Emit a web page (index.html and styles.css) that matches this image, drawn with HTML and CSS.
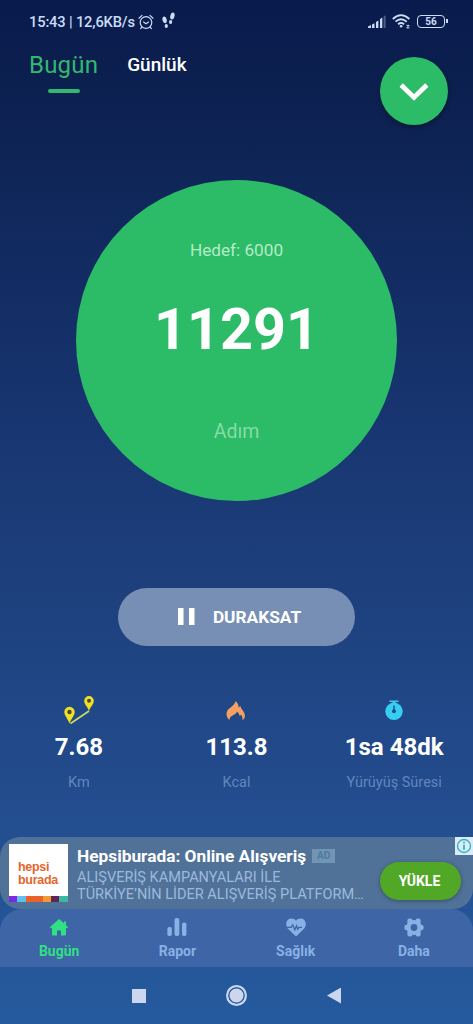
FILE: index.html
```html
<!DOCTYPE html>
<html lang="tr">
<head>
  <meta charset="UTF-8" />
  <meta name="viewport" content="width=device-width, initial-scale=1.0"/>
  <title>Adım Sayar</title>
  <link rel="stylesheet" href="styles.css">
</head>
<body>
  <div class="status-bar">
    <span class="status-text">15:43 | 12,6KB/s</span>
    <svg class="alarm" width="16" height="16" viewBox="0 0 16 16" fill="none" stroke="currentColor" stroke-width="1.2" stroke-linecap="round">
      <circle cx="8" cy="8.5" r="5.8"/>
      <path d="M5.6 8l2.4 1.7L10.6 8M1 4.2L4 1.4M15 4.2L12 1.4M3.9 13.2l-1.2 1.3M12.1 13.2l1.2 1.3"/>
    </svg>
    <svg class="steps" width="13" height="17" viewBox="0 0 13 17" fill="currentColor">
      <ellipse cx="2.6" cy="7.8" rx="2.1" ry="3.4" transform="rotate(-12 2.6 7.8)"/>
      <ellipse cx="4.3" cy="14" rx="1.6" ry="2"/>
      <ellipse cx="10.4" cy="4" rx="2.1" ry="3.5" transform="rotate(14 10.4 4)"/>
      <ellipse cx="8.6" cy="10" rx="1.6" ry="1.9"/>
    </svg>
    <div class="status-right">
      <svg width="18" height="13" viewBox="0 0 18 13" fill="currentColor">
        <path d="M0 13v-1.5L3 10v3zM4 9.5l2.5-1.3V13H4zM8 7l2.4-1.4V13H8zM12 4l2.3-1.5V13H12z"/>
        <path d="M15.6 1.5L17.6.3V13h-2z" opacity=".35"/>
      </svg>
      <svg width="19" height="15" viewBox="0 0 19 15" fill="none" stroke="currentColor" stroke-width="1.8">
        <path d="M.8 5Q9 -2.7 17.4 5M3.5 7.7Q9 2.7 14.7 7.7M6.1 10.2Q9 7.8 12.1 10.2"/>
        <circle cx="9.1" cy="12.2" r="1.3" fill="currentColor" stroke="none"/>
        <path d="M14.5 11.4h2.6l-2.4 2.5h2.8" stroke-width="1"/>
      </svg>
      <span class="battery">56</span>
    </div>
  </div>

  <header>
    <div class="tab active">Bugün</div>
    <div class="tab">Günlük</div>
    <button class="round-btn">
      <svg width="30" height="20" viewBox="0 0 30 20" fill="none" stroke="#fff" stroke-width="4.8">
        <path d="M2.2 3L15 15.5L27.8 3"/>
      </svg>
    </button>
  </header>

  <div class="circle">
    <p class="goal">Hedef: 6000</p>
    <h1>11291</h1>
    <p class="unit">Adım</p>
  </div>

  <button class="pause-btn">
    <svg width="17" height="17" viewBox="0 0 17 17" fill="#fff">
      <path d="M0 0h5.5v17H0zM11 0h5.5v17H11z"/>
    </svg>
    DURAKSAT
  </button>

  <div class="stats">
    <div class="stat">
      <svg width="32" height="30" viewBox="0 0 32 30">
        <path d="M7.5 28.5L26 16" stroke="#c9df62" stroke-width="1.6"/>
        <path d="M6.5 28.5C4.5 23 1.3 20.7 1.3 17a5.2 5.2 0 0 1 10.4 0c0 3.7-3.2 6-5.2 11.5z" fill="#f2df22"/>
        <circle cx="6.5" cy="17" r="2.2" fill="#3f4c43"/>
        <path d="M26 16c-1.7-4.7-4.8-6.7-4.8-10.2a4.8 4.8 0 0 1 9.6 0C30.8 9.3 27.7 11.3 26 16z" fill="#f2df22"/>
        <circle cx="26" cy="5.7" r="2" fill="#3f4c43"/>
      </svg>
      <strong>7.68</strong>
      <span>Km</span>
    </div>
    <div class="stat">
      <svg width="20" height="30" viewBox="0 0 20 30">
        <path d="M3.500 25C-.5 21.500-.3 16.500 3 13.700 5.800 11.500 9 9.500 9.500 6c2.200 1.800 3.200 3.900 3.200 6.500l1.700-1.500c.3 3 4.500 5.500 4.500 9.700 0 2.200-1 3.600-2.700 4.300.5-2 .2-3.700-1-5.200l-1.600 1.200c-.4-2.300-1.200-3.600-2.800-4.300-.3 3.300-7.600 3.500-7.300 8.300z" fill="#f3a062"/>
      </svg>
      <strong>113.8</strong>
      <span>Kcal</span>
    </div>
    <div class="stat">
      <svg width="20" height="30" viewBox="0 0 20 30">
        <path d="M5.5 5.5h9v1.6h-9zM8.5 6h3v4h-3z" fill="#38cdf3"/>
        <circle cx="10" cy="16.3" r="8.7" fill="#38cdf3"/>
        <path d="M10 10.5v7" stroke="#205086" stroke-width="1.4"/>
        <circle cx="10" cy="16.3" r="2" fill="#205086"/>
      </svg>
      <strong>1sa 48dk</strong>
      <span>Yürüyüş Süresi</span>
    </div>
  </div>

  <div class="ad">
    <div class="ad-logo">
      <p>hepsi<br>burada</p>
      <div class="stripe"></div>
    </div>
    <div class="ad-text">
      <h2>Hepsiburada: Online Alışveriş <small>AD</small></h2>
      <p>ALIŞVERİŞ KAMPANYALARI İLE</p>
      <p>TÜRKİYE’NİN LİDER ALIŞVERİŞ PLATFORM…</p>
    </div>
    <button class="install-btn">YÜKLE</button>
    <div class="ad-info">
      <svg width="18" height="18" viewBox="0 0 18 18" fill="none" stroke="#35b6c2">
        <circle cx="9" cy="9" r="6.5" stroke-width="1.4"/>
        <path d="M9 7.7v5M9 4.8v1.6" stroke-width="1.8"/>
      </svg>
    </div>
  </div>

  <nav>
    <div class="nav-item active">
      <svg width="20" height="20" viewBox="0 0 20 20" fill="currentColor">
        <path d="M10 1L.8 9.3l1.2 1L3 9.700v6.500q0 1.300 1.300 1.300H8v-5h4v5h3.700q1.300 0 1.300-1.300V9.700l1 .6 1.200-1-2.200-2V3.500h-2v1.800z"/>
      </svg>
      Bugün
    </div>
    <div class="nav-item">
      <svg width="20" height="20" viewBox="0 0 20 20" fill="currentColor">
        <rect x=".4" y="9" width="4.4" height="9" rx="1.8"/>
        <rect x="7.5" y="0" width="4.8" height="18" rx="2"/>
        <rect x="15" y="4.5" width="4.4" height="13.5" rx="1.8"/>
      </svg>
      Rapor
    </div>
    <div class="nav-item">
      <svg width="20" height="20" viewBox="0 0 20 20">
        <path d="M10 18.5L2 10.8C-1.5 6.5.5.5 5.3.5c2 0 3.700.8 4.700 2.200C11 1.300 12.700.5 14.700.5 19.500.5 21.500 6.500 18 10.800z" fill="currentColor"/>
        <path d="M0 9.300h5l1.700-2.500 2.100 5 1.700-4 1.200 3.500 1.300-2H16" fill="none" stroke="#3e66a6" stroke-width="1.3"/>
      </svg>
      Sağlık
    </div>
    <div class="nav-item">
      <svg width="20" height="20" viewBox="0 0 20 20">
        <g fill="currentColor">
          <circle cx="10" cy="9.5" r="7.5"/>
          <rect x="3.4" y=".5" width="5" height="18" rx="2"/>
          <rect x="11.6" y=".5" width="5" height="18" rx="2"/>
          <rect x=".4" y="6.7" width="19.2" height="5.6" rx="2.2"/>
        </g>
        <circle cx="10" cy="9.5" r="3.4" fill="#3e66a6"/>
      </svg>
      Daha
    </div>
  </nav>

  <div class="system-bar">
    <span class="recent"></span>
    <span class="home"></span>
    <span class="back"></span>
  </div>
</body>
</html>
```
FILE: styles.css
```css
:root {
  --green: #2cbb67;
  --accent: #33b86d;
  --status: #cbdcf7;
  --nav: #88b1e5;
  --nav-bg: #3e66a6;
}

* {
  margin: 0;
  padding: 0;
  box-sizing: border-box;
}

body {
  height: 1024px;
  display: flex;
  flex-direction: column;
  background: linear-gradient(#091b4c 0, #0d2252 120px, #17346f 400px, #1e427f 620px, #224a8b 760px, #255698 940px, #255a9e 1024px);
  color: #fff;
  font-family: Roboto, sans-serif;
  overflow: hidden;
}

button {
  border: none;
  color: #fff;
  font-family: inherit;
}

svg {
  display: block;
  flex: none;
}

.status-bar {
  height: 44px;
  display: flex;
  align-items: center;
  padding: 0 27px 0 29px;
  color: var(--status);
}

.status-text {
  width: 109px;
  font-size: 14.7px;
  font-weight: 500;
  letter-spacing: -0.16px;
  white-space: nowrap;
}

.steps {
  margin: 0 0 2px 8px;
}

.status-right {
  display: flex;
  align-items: center;
  gap: 6px;
  margin-left: auto;
}

.battery {
  position: relative;
  width: 28px;
  height: 13px;
  margin-right: 1px;
  border: 1.5px solid var(--status);
  border-radius: 4px;
  font-size: 10px;
  font-weight: 700;
  line-height: 11px;
  text-align: center;
}

.battery::after {
  content: "";
  position: absolute;
  right: -4px;
  top: 3px;
  width: 2px;
  height: 4px;
  background: var(--status);
}

header {
  height: 136px;
  display: flex;
  align-items: flex-start;
  padding: 7px 25px 0 29px;
}

.tab {
  margin-right: 29px;
  padding-top: 1px;
  font-size: 19px;
  font-weight: 500;
  line-height: 26px;
}

.tab.active {
  padding: 0;
  color: var(--accent);
  font-size: 24px;
  font-weight: 400;
  line-height: 28px;
  letter-spacing: 0.2px;
}

.tab.active::after {
  content: "";
  display: block;
  width: 32px;
  height: 4px;
  margin: 10px auto 0;
  border-radius: 2px;
  background: var(--accent);
}

.round-btn {
  width: 68px;
  height: 68px;
  display: flex;
  justify-content: center;
  align-items: center;
  margin: 6px 0 0 auto;
  padding-top: 3px;
  border-radius: 50%;
  background: var(--green);
  box-shadow: 0 2px 5px rgba(0, 0, 0, 0.4);
}

.circle {
  width: 321px;
  height: 321px;
  flex: none;
  margin: 0 auto;
  padding-top: 59px;
  border-radius: 50%;
  background: var(--green);
  text-align: center;
}

.goal {
  color: #b4ecc8;
  font-size: 17.2px;
  line-height: 22px;
}

.circle h1 {
  margin-top: 35px;
  font-size: 57.5px;
  font-weight: 700;
  line-height: 68px;
}

.unit {
  margin-top: 56px;
  color: #87dba6;
  font-size: 19.5px;
  line-height: 24px;
}

.pause-btn {
  width: 237px;
  height: 58px;
  flex: none;
  display: flex;
  justify-content: center;
  align-items: center;
  gap: 18px;
  margin: 87px auto 0;
  padding-left: 6px;
  border-radius: 29px;
  background: #788fb5;
  font-size: 17.3px;
  font-weight: 700;
}

.stats {
  display: grid;
  grid-template-columns: repeat(3, 1fr);
  height: 192px;
  padding-top: 49px;
}

.stat {
  display: flex;
  flex-direction: column;
  align-items: center;
}

.stat strong {
  margin-top: 8px;
  font-size: 24px;
  line-height: 28px;
}

.stat span {
  margin-top: 13px;
  color: #6186bd;
  font-size: 14.5px;
  line-height: 18px;
}

.ad {
  position: relative;
  height: 72px;
  flex: none;
  display: flex;
  align-items: flex-start;
  padding: 7px 12px 0 9px;
  border-radius: 20px;
  background: #507198;
}

.ad-logo {
  width: 59px;
  height: 58px;
  flex: none;
  display: flex;
  flex-direction: column;
  justify-content: space-between;
  background: #fff;
}

.ad-logo p {
  padding: 17px 0 0 9px;
  color: #e4662b;
  font-family: "Liberation Sans", sans-serif;
  font-size: 12.5px;
  font-weight: 700;
  line-height: 12.5px;
  letter-spacing: -0.3px;
}

.stripe {
  height: 6px;
  background: linear-gradient(90deg, #7a2be0 0 14%, #5fc0f0 14% 28%, #ea612a 28% 58%, #ee9b35 58% 72%, #632558 72% 85%, #3bb8a0 85%);
}

.ad-text {
  flex: none;
  margin-left: 9px;
  white-space: nowrap;
}

.ad-text h2 {
  display: flex;
  align-items: center;
  margin: 2px 0 3px;
  font-size: 17.3px;
  font-weight: 700;
  line-height: 20px;
}

.ad-text small {
  width: 23px;
  height: 14px;
  margin-left: 6px;
  background: #7195b2;
  color: #507b9d;
  font-size: 10px;
  line-height: 14px;
  text-align: center;
}

.ad-text p {
  color: #9bb9df;
  font-size: 14.55px;
  line-height: 17px;
}

.install-btn {
  width: 81px;
  height: 38px;
  margin: 18px 0 0 auto;
  padding-right: 2px;
  border-radius: 19px;
  background: #51a827;
  box-shadow: 0 1px 4px rgba(0, 0, 0, 0.3);
  font-size: 14px;
  font-weight: 700;
}

.ad-info {
  position: absolute;
  top: 0;
  right: 0;
  background: #dcebf8;
}

nav {
  height: 58px;
  flex: none;
  display: grid;
  grid-template-columns: repeat(4, 1fr);
  border-radius: 22px 22px 0 0;
  background: var(--nav-bg);
}

.nav-item {
  display: flex;
  flex-direction: column;
  align-items: center;
  gap: 5px;
  padding-top: 9px;
  color: var(--nav);
  font-size: 14px;
  font-weight: 700;
  line-height: 17px;
}

.nav-item.active {
  color: #31df84;
}

.system-bar {
  height: 57px;
  display: flex;
  justify-content: center;
  align-items: center;
  gap: 80px;
}

.recent {
  width: 14px;
  height: 14px;
  background: #ccd7ee;
}

.home {
  width: 21px;
  height: 21px;
  border: 2px solid #ccd7ee;
  border-radius: 50%;
  background: #ccd7ee;
  box-shadow: inset 0 0 0 1.5px #255a9e;
}

.back {
  width: 14px;
  height: 16px;
  background: #ccd7ee;
  clip-path: polygon(0 50%, 100% 0, 100% 100%);
}
```
